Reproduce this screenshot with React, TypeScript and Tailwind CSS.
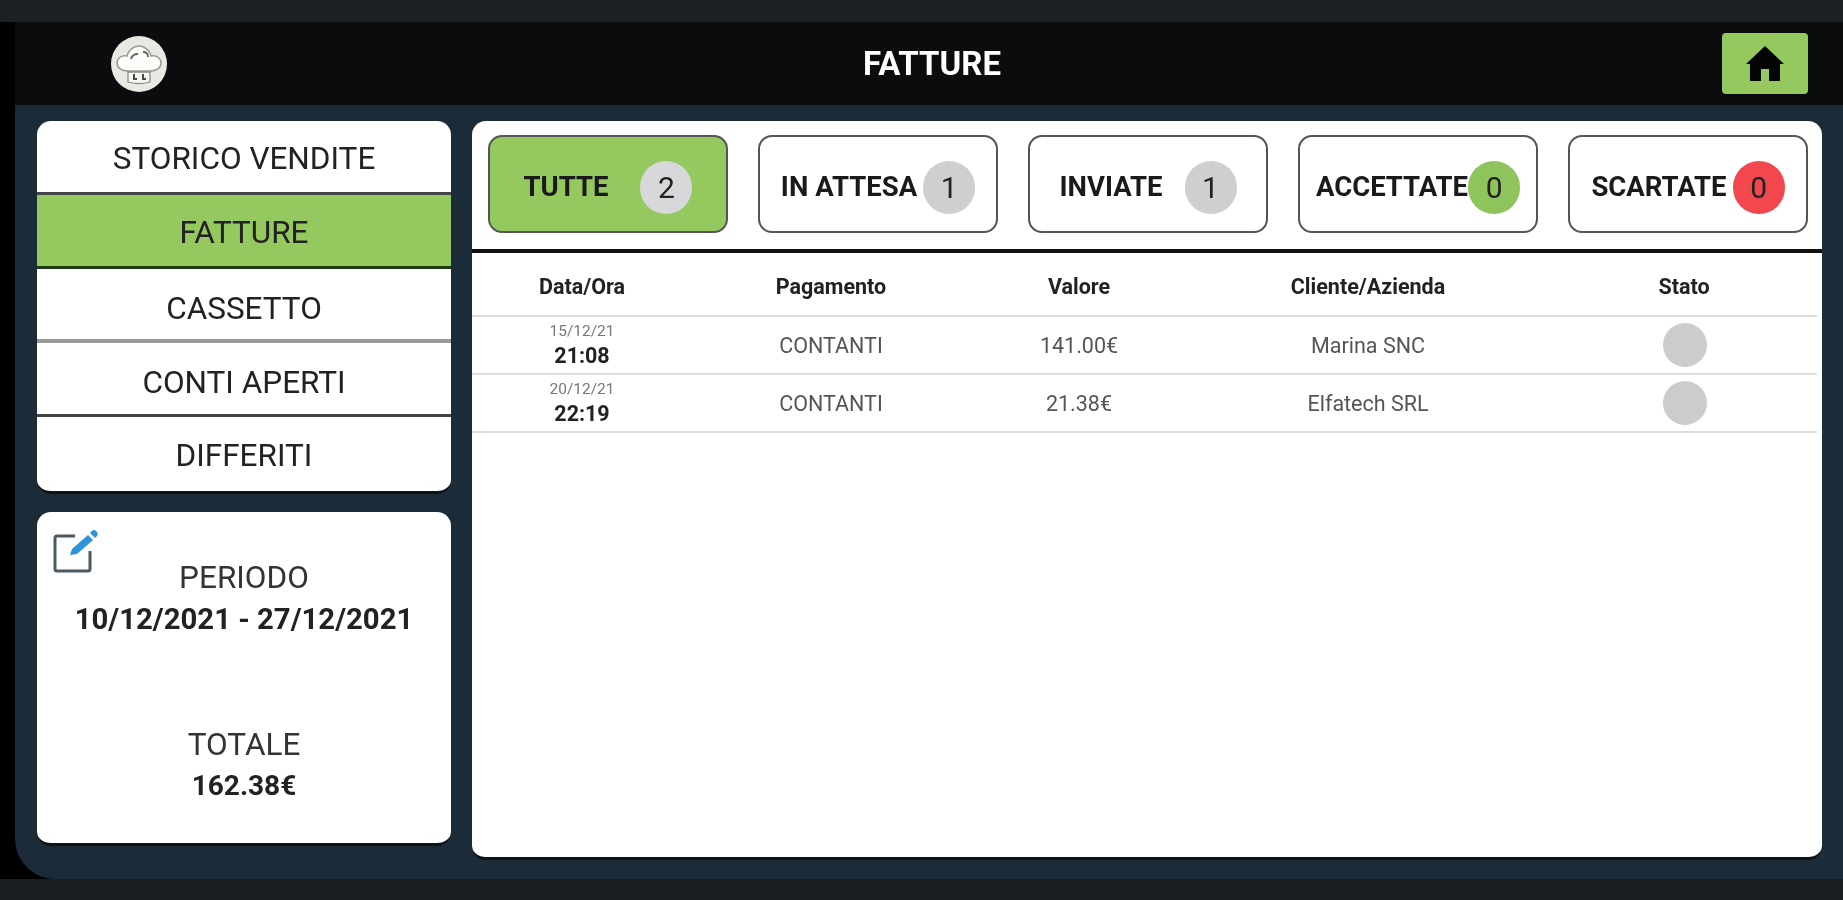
const font = { fontFamily: "Roboto, 'Liberation Sans', sans-serif" };

function Logo() {
  return (
    <svg width="58" height="58" viewBox="0 0 58 58" aria-label="logo">
      <circle cx="29" cy="29" r="28" fill="#e9e9e4" />
      <path d="M18 36c-6 0-11-3-11-8s5-8 10-7c1-5 6-10 12-10s11 5 12 10c5-1 10 2 10 7s-5 8-11 8z" fill="#fcfcfa" stroke="#9a9a94" strokeWidth="1.5" />
      <path d="M21 24c1-4 4-5 7-5M33 17c3 0 5 2 5 5" fill="none" stroke="#66665f" strokeWidth="1.8" />
      <path d="M18 37h22v10c-7 2-15 2-22 0z" fill="#f6f6f2" stroke="#8a8a84" strokeWidth="1.3" />
      <path d="M24 39v5h3M33 39v5h3" fill="none" stroke="#4a4a44" strokeWidth="2" />
    </svg>
  );
}

function HomeIcon() {
  return (
    <svg width="38" height="36" viewBox="0 0 38 36" aria-label="home">
      <path d="M19 0 0 18h4v17h11V23h8v12h11V18h4z" fill="#050505" />
    </svg>
  );
}

function EditIcon() {
  return (
    <svg width="48" height="48" viewBox="0 0 48 48" aria-label="modifica">
      <path d="M23 9H5a2 2 0 0 0-2 2v31a2 2 0 0 0 2 2h31a2 2 0 0 0 2-2V24" fill="none" stroke="#4b5a63" strokeWidth="3" />
      <path d="M18 28l2-6L36 8l5 5-16 14z" fill="#2f93dc" />
      <path d="M38 6l2-2a3 3 0 0 1 4 0l1 1a3 3 0 0 1 0 4l-2 2z" fill="#2f93dc" />
    </svg>
  );
}

function MenuRow({ label, active, extra }: { label: string; active?: boolean; extra: string }) {
  return (
    <div
      className={`flex h-[74px] items-center justify-center text-[31.5px] text-[#222222] ${active ? "bg-[#95c85e]" : "bg-white"} ${extra}`}
    >
      {label}
    </div>
  );
}

function Filter({ label, count, active, badge, gap }: { label: string; count: number; active?: boolean; badge: string; gap: string }) {
  return (
    <div
      className={`flex h-[98px] w-[240px] items-center justify-center rounded-[14px] border-2 border-[#555555] pt-[6px] ${active ? "bg-[#95c85e]" : "bg-white"} ${gap}`}
    >
      <span className="whitespace-nowrap text-[27.5px] font-bold text-[#1a1a1a]">{label}</span>
      <span className={`flex h-[53px] w-[52px] shrink-0 items-center justify-center rounded-full text-[30px] text-[#222222] ${badge}`}>
        {count}
      </span>
    </div>
  );
}

const cols = "grid grid-cols-[220px_278px_218px_360px_272px] items-center text-center";

function Row({ date, time, pay, value, client }: { date: string; time: string; pay: string; value: string; client: string }) {
  return (
    <div className={`${cols} h-[58px] border-b-2 border-[#dddddd] text-[21.5px] text-[#555555]`}>
      <div className="flex flex-col items-center leading-none">
        <span className="text-[15.5px] text-[#777777]">{date}</span>
        <span className="mt-[6px] text-[21.5px] font-bold text-[#222222]">{time}</span>
      </div>
      <span className="pt-[2px]">{pay}</span>
      <span className="pt-[2px]">{value}</span>
      <span className="pt-[2px]">{client}</span>
      <span className="flex justify-center pl-[2px]">
        <span className="h-[44px] w-[44px] rounded-full bg-[#cccccc]" />
      </span>
    </div>
  );
}

export default function App() {
  return (
    <div style={font} className="flex h-[900px] w-[1843px] flex-col overflow-hidden bg-[#1b2024] blur-[0.7px]">
      <div className="h-[22px] shrink-0 bg-[#1b2024]" />
      <div className="flex flex-1 bg-black">
        <div className="w-[15px] shrink-0" />
        <div className="flex flex-1 flex-col overflow-hidden rounded-bl-[40px] bg-[#1c2b38]">
          <header className="flex h-[83px] shrink-0 items-center justify-between bg-[#0b0c0d] pl-[95px] pr-[35px]">
            <Logo />
            <h1 className="mr-[26px] text-[33px] font-bold text-white">FATTURE</h1>
            <div className="flex h-[61px] w-[86px] items-center justify-center rounded-[4px] bg-[#95c85e]">
              <HomeIcon />
            </div>
          </header>
          <main className="flex flex-1 gap-[21px] pl-[22px] pr-[21px] pt-[16px]">
            <aside className="flex w-[414px] shrink-0 flex-col gap-[18px]">
              <div className="overflow-hidden rounded-[14px] border-b-[3px] border-[#0d1216]">
                <MenuRow label="STORICO VENDITE" extra="pt-[5px] border-b-[3px] border-[#444444]" />
                <MenuRow label="FATTURE" active extra="pt-[5px] border-b-[3px] border-[#1f3d12]" />
                <MenuRow label="CASSETTO" extra="pt-[9px] border-b-[4px] border-[#9a9a9a]" />
                <MenuRow label="CONTI APERTI" extra="pt-[8px] border-b-[3px] border-[#444444]" />
                <MenuRow label="DIFFERITI" extra="pt-[3px]" />
              </div>
              <div className="relative flex h-[334px] flex-col items-center rounded-[14px] border-b-[3px] border-[#0d1216] bg-white pt-[48px]">
                <span className="absolute left-[15px] top-[15px]"><EditIcon /></span>
                <span className="text-[31.5px] leading-[36px] text-[#333333]">PERIODO</span>
                <span className="mt-[5px] text-[29.3px] font-bold leading-[36px] text-[#222222]">10/12/2021 - 27/12/2021</span>
                <span className="mt-[90px] text-[31.5px] leading-[36px] text-[#333333]">TOTALE</span>
                <span className="mt-[5px] text-[28px] font-bold leading-[36px] text-[#222222]">162.38€</span>
              </div>
            </aside>
            <section className="flex h-[739px] flex-1 flex-col overflow-hidden rounded-[14px] border-b-[3px] border-[#0d1216] bg-white">
              <div className="flex h-[132px] shrink-0 items-start justify-between border-b-4 border-[#111111] pl-[16px] pr-[14px] pt-[14px]">
                <Filter label="TUTTE" count={2} active badge="bg-[#d8d8da]" gap="gap-[32px]" />
                <Filter label="IN ATTESA" count={1} badge="bg-[#cfcfcf]" gap="gap-[6px]" />
                <Filter label="INVIATE" count={1} badge="bg-[#cfcfcf]" gap="gap-[22px]" />
                <Filter label="ACCETTATE" count={0} badge="bg-[#8fc45c]" gap="gap-0" />
                <Filter label="SCARTATE" count={0} badge="bg-[#f2474c]" gap="gap-[6px]" />
              </div>
              <div className="pr-[5px]">
                <div className={`${cols} h-[64px] border-b-2 border-[#dddddd] pt-[6px] text-[21.5px] font-bold text-[#222222]`}>
                  <span>Data/Ora</span>
                  <span>Pagamento</span>
                  <span>Valore</span>
                  <span>Cliente/Azienda</span>
                  <span>Stato</span>
                </div>
                <Row date="15/12/21" time="21:08" pay="CONTANTI" value="141.00€" client="Marina SNC" />
                <Row date="20/12/21" time="22:19" pay="CONTANTI" value="21.38€" client="Elfatech SRL" />
              </div>
            </section>
          </main>
        </div>
      </div>
      <div className="h-[21px] shrink-0 bg-[#1b1f22]" />
    </div>
  );
}
